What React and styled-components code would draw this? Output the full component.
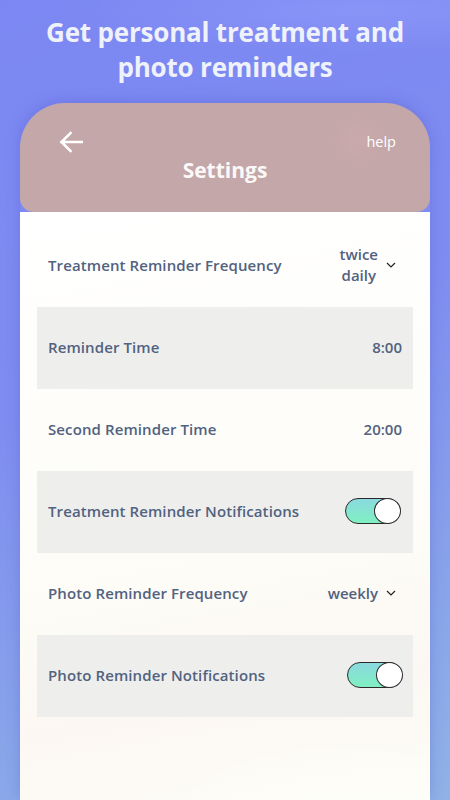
import React from "react";
import styled, { createGlobalStyle } from "styled-components";

const GlobalStyle = createGlobalStyle`
  html, body { margin: 0; padding: 0; }
  body { width: 450px; height: 800px; overflow: hidden; font-family: "Open Sans", "Noto Sans", sans-serif; }
  * { box-sizing: border-box; }
`;

const Screen = styled.div`
  position: relative;
  width: 450px;
  height: 800px;
  overflow: hidden;
  display: flex;
  flex-direction: column;
  align-items: center;
  background:
    radial-gradient(ellipse 420px 60px at 360px 10px, rgba(160, 170, 255, 0.35), transparent 70%),
    linear-gradient(160deg, #7c87f3 0%, #7f8df0 45%, #89a6e9 80%, #90b2e6 100%);
`;

const Headline = styled.h1`
  margin: 15px 0 0;
  font-family: "Open Sans", sans-serif;
  font-weight: 700;
  font-size: 26px;
  line-height: 35px;
  letter-spacing: -0.2px;
  color: #eff1fb;
  text-align: center;
`;

const Phone = styled.div`
  margin-top: 18px;
  width: 410px;
  flex: 1;
  display: flex;
  flex-direction: column;
  border-radius: 45px 45px 0 0;
  box-shadow: 0 -2px 14px rgba(80, 90, 200, 0.35);
`;

const PhoneHeader = styled.header`
  height: 109px;
  padding-top: 28px;
  border-radius: 45px 45px 14px 14px;
  background:
    radial-gradient(circle 30px at 337px 37px, rgba(205, 170, 175, 0.7), transparent 100%),
    #c4a7a8;
  display: flex;
  flex-direction: column;
  color: #ffffff;
`;

const TopBar = styled.div`
  height: 22px;
  padding: 0 34px 0 39px;
  display: flex;
  align-items: center;
  justify-content: space-between;
`;

const HelpLink = styled.span`
  font-family: "Open Sans", sans-serif;
  font-size: 14.5px;
  font-weight: 400;
  color: #ffffff;
  line-height: 18px;
`;

const Title = styled.h2`
  margin: 3px 0 0;
  text-align: center;
  font-family: "Open Sans", sans-serif;
  font-weight: 700;
  font-size: 21px;
  line-height: 28px;
  color: #fbf8f8;
`;

const Body = styled.main`
  flex: 1;
  padding: 13px 17px 0;
  background:
    radial-gradient(ellipse 260px 120px at 330px 620px, rgba(255, 255, 250, 0.9), transparent 80%),
    linear-gradient(170deg, #ffffff 0%, #fdfcf7 60%, #fcf7f2 80%, #fdfdf6 100%);
`;

const Row = styled.div`
  height: 82px;
  padding: 0 11px 2px;
  display: flex;
  align-items: center;
  justify-content: space-between;
  background: ${(p) => (p.$shaded ? "#eeefed" : "transparent")};
  color: #52627f;
  font-family: "Open Sans", sans-serif;
  font-weight: 600;
  font-size: 15px;
`;

const Label = styled.span`
  letter-spacing: 0.1px;
`;

const ValueGroup = styled.div`
  display: flex;
  align-items: center;
  gap: 8px;
  padding-right: ${(p) => p.$pad || 0}px;
`;

const Value = styled.span`
  text-align: center;
  line-height: 21px;
`;

const Toggle = styled.div`
  position: relative;
  width: 55px;
  height: 26px;
  border: 1.5px solid #2e2a2c;
  border-radius: 13px;
  background: linear-gradient(180deg, #8ad9df 0%, #80f0c2 100%);
  margin-right: ${(p) => p.$mr || 0}px;
`;

const Knob = styled.span`
  position: absolute;
  right: -1.5px;
  top: -1.5px;
  width: 27px;
  height: 26px;
  border-radius: 50%;
  background: #ffffff;
  border: 1.5px solid #2e2a2c;
`;

const BackArrow = () => (
  <svg width="24" height="22" viewBox="0 0 24 22" fill="none">
    <path d="M23 11H2.5M11.5 2L2.5 11l9 9" stroke="#ffffff" strokeWidth="2.6" strokeLinecap="square" />
  </svg>
);

const Chevron = () => (
  <svg width="10" height="6" viewBox="0 0 10 6" fill="none">
    <path d="M1 1l4 4 4-4" stroke="#222" strokeWidth="1.2" />
  </svg>
);

export default function App() {
  return (
    <>
      <GlobalStyle />
      <Screen>
        <Headline>
          Get personal treatment and
          <br />
          photo reminders
        </Headline>
        <Phone>
          <PhoneHeader>
            <TopBar>
              <BackArrow />
              <HelpLink>help</HelpLink>
            </TopBar>
            <Title>Settings</Title>
          </PhoneHeader>
          <Body>
            <Row>
              <Label>Treatment Reminder Frequency</Label>
              <ValueGroup $pad={6}>
                <Value>
                  twice
                  <br />
                  daily
                </Value>
                <Chevron />
              </ValueGroup>
            </Row>
            <Row $shaded>
              <Label>Reminder Time</Label>
              <Value>8:00</Value>
            </Row>
            <Row>
              <Label>Second Reminder Time</Label>
              <Value>20:00</Value>
            </Row>
            <Row $shaded>
              <Label>Treatment Reminder Notifications</Label>
              <Toggle $mr={2}>
                <Knob />
              </Toggle>
            </Row>
            <Row>
              <Label>Photo Reminder Frequency</Label>
              <ValueGroup $pad={6}>
                <Value>weekly</Value>
                <Chevron />
              </ValueGroup>
            </Row>
            <Row $shaded>
              <Label>Photo Reminder Notifications</Label>
              <Toggle>
                <Knob />
              </Toggle>
            </Row>
          </Body>
        </Phone>
      </Screen>
    </>
  );
}
